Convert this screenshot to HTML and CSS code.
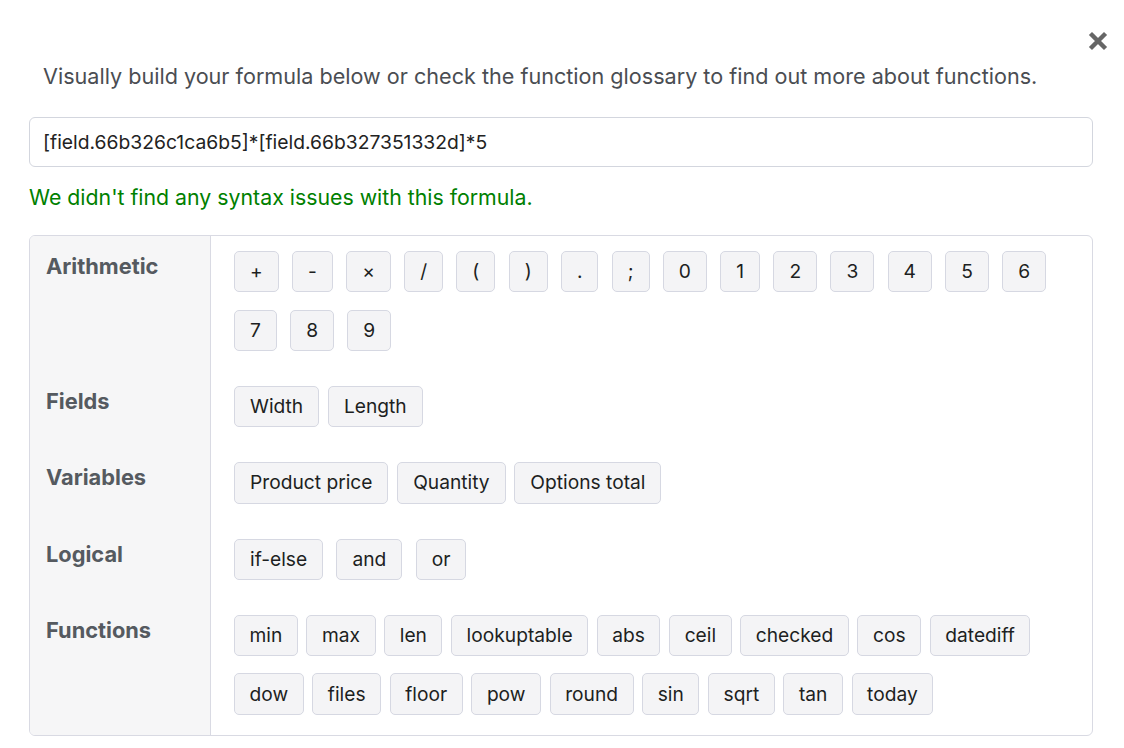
FILE: index.html
```html
<!DOCTYPE html>
<html lang="en">
<head>
<meta charset="utf-8">
<title>Formula builder</title>
<link rel="stylesheet" href="styles.css">
</head>
<body>
<div class="modal">
  <div class="modal-head">
    <button class="close" aria-label="Close">
      <svg viewBox="0 0 20 20" width="20" height="20"><path d="M4 4 L16 16 M16 4 L4 16" stroke="#666" stroke-width="4.4" stroke-linecap="square" fill="none"/></svg>
    </button>
  </div>
  <p class="intro">Visually build your formula below or check the function glossary to find out more about functions.</p>
  <input class="formula" type="text" value="[field.66b326c1ca6b5]*[field.66b327351332d]*5">
  <p class="status">We didn't find any syntax issues with this formula.</p>
  <div class="builder">
    <div class="label">Arithmetic</div>
    <div class="cell">
      <div class="row wide">
        <button class="tok">+</button><button class="tok">-</button><button class="tok">×</button><button class="tok">/</button><button class="tok">(</button><button class="tok">)</button><button class="tok">.</button><button class="tok">;</button><button class="tok">0</button><button class="tok">1</button><button class="tok">2</button><button class="tok">3</button><button class="tok">4</button><button class="tok">5</button><button class="tok">6</button>
      </div>
      <div class="row wide">
        <button class="tok">7</button><button class="tok">8</button><button class="tok">9</button>
      </div>
    </div>

    <div class="label">Fields</div>
    <div class="cell">
      <div class="row">
        <button class="tok">Width</button><button class="tok">Length</button>
      </div>
    </div>

    <div class="label">Variables</div>
    <div class="cell">
      <div class="row">
        <button class="tok">Product price</button><button class="tok">Quantity</button><button class="tok">Options total</button>
      </div>
    </div>

    <div class="label">Logical</div>
    <div class="cell">
      <div class="row wide">
        <button class="tok">if-else</button><button class="tok">and</button><button class="tok">or</button>
      </div>
    </div>

    <div class="label">Functions</div>
    <div class="cell">
      <div class="row">
        <button class="tok fn">min</button><button class="tok fn">max</button><button class="tok fn">len</button><button class="tok fn">lookuptable</button><button class="tok fn">abs</button><button class="tok fn">ceil</button><button class="tok fn">checked</button><button class="tok fn">cos</button><button class="tok fn">datediff</button>
      </div>
      <div class="row">
        <button class="tok fn">dow</button><button class="tok fn">files</button><button class="tok fn">floor</button><button class="tok fn">pow</button><button class="tok fn">round</button><button class="tok fn">sin</button><button class="tok fn">sqrt</button><button class="tok fn">tan</button><button class="tok fn">today</button>
      </div>
    </div>
  </div>
</div>
</body>
</html>
```

FILE: styles.css
```css
html, body {
  margin: 0;
  padding: 0;
  background: #ffffff;
}

body {
  font-family: Inter, "Noto Sans", "Liberation Sans", sans-serif;
  color: #1e1e1e;
}

.modal {
  padding: 31px 31px 12px 29px;
  display: flex;
  flex-direction: column;
}

.modal-head {
  display: flex;
  justify-content: flex-end;
  height: 20px;
}

.close {
  border: 0;
  background: none;
  padding: 0;
  margin: 0 -15px 0 0;
  width: 20px;
  height: 20px;
  cursor: pointer;
  display: flex;
}

.intro {
  margin: 10px 0 0 14px;
  font-size: 21.6px;
  line-height: 30px;
  color: #4a4d52;
}

.formula {
  margin: 26px 0 0 0;
  height: 50px;
  box-sizing: border-box;
  border: 1px solid #d3d6de;
  border-radius: 6px;
  padding: 0 13px;
  font-family: inherit;
  font-size: 19.3px;
  color: #222;
  background: #fff;
  outline: none;
}

.status {
  margin: 15.3px 0 0 0;
  font-size: 21.3px;
  line-height: 30px;
  color: #008000;
}

.builder {
  margin-top: 22.7px;
  display: grid;
  grid-template-columns: 181px 1fr;
  border: 1px solid #d9dae3;
  border-radius: 6px;
  overflow: hidden;
}

.label {
  background: #f6f6f7;
  border-right: 1px solid #d9dae3;
  padding: 17px 0 0 16px;
  font-size: 21.8px;
  line-height: 26px;
  font-weight: 700;
  color: #555a60;
}

.cell {
  padding: 15px 16px 20px 23px;
  display: flex;
  flex-direction: column;
  gap: 17.4px;
}

.row {
  display: flex;
  gap: 8.7px;
}

.row.wide {
  gap: 13.3px;
}

.tok {
  font-family: inherit;
  font-size: 19.2px;
  line-height: 23px;
  padding: 8.15px 15px;
  border: 1px solid #d6d8e2;
  border-radius: 5px;
  background: #f4f4f6;
  color: #1d1f22;
  cursor: pointer;
}

.tok.fn {
  padding-left: 14.5px;
  padding-right: 14.5px;
}
```
